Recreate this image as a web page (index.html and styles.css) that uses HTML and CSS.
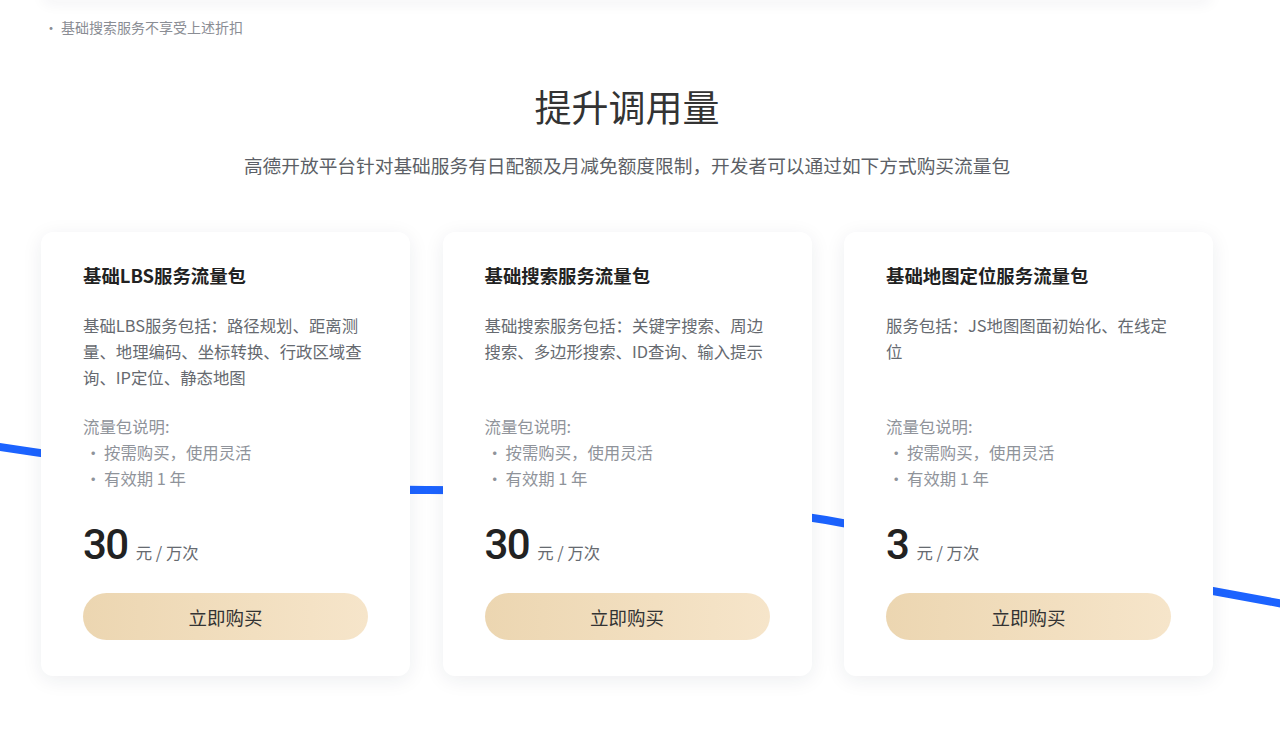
FILE: index.html
```html
<!DOCTYPE html>
<html lang="zh-CN">
<head>
<meta charset="utf-8">
<title>提升调用量</title>
<link rel="stylesheet" href="styles.css">
</head>
<body>
<div class="page">
  <svg class="bg-line" width="1280" height="746" viewBox="0 0 1280 746" aria-hidden="true">
    <path d="M-20 444 C 150 470, 300 490, 426 490 C 560 490, 700 500, 826 520 L 1300 607" fill="none" stroke="#1c63ff" stroke-width="8"/>
  </svg>
  <div class="content">
    <div class="prev-card"></div>
    <ul class="top-note">
      <li>基础搜索服务不享受上述折扣</li>
    </ul>
    <h1 class="title">提升调用量</h1>
    <p class="subtitle">高德开放平台针对基础服务有日配额及月减免额度限制，开发者可以通过如下方式购买流量包</p>
    <div class="cards">
      <div class="card">
        <h2 class="card-title">基础LBS服务流量包</h2>
        <p class="card-desc">基础LBS服务包括：路径规划、距离测量、地理编码、坐标转换、行政区域查询、IP定位、静态地图</p>
        <div class="card-note">
          <div>流量包说明:</div>
          <ul>
            <li>按需购买，使用灵活</li>
            <li>有效期 1 年</li>
          </ul>
        </div>
        <div class="price"><span class="num">30</span><span class="unit">元 / 万次</span></div>
        <button class="buy">立即购买</button>
      </div>
      <div class="card">
        <h2 class="card-title">基础搜索服务流量包</h2>
        <p class="card-desc">基础搜索服务包括：关键字搜索、周边搜索、多边形搜索、ID查询、输入提示</p>
        <div class="card-note">
          <div>流量包说明:</div>
          <ul>
            <li>按需购买，使用灵活</li>
            <li>有效期 1 年</li>
          </ul>
        </div>
        <div class="price"><span class="num">30</span><span class="unit">元 / 万次</span></div>
        <button class="buy">立即购买</button>
      </div>
      <div class="card">
        <h2 class="card-title">基础地图定位服务流量包</h2>
        <p class="card-desc">服务包括：JS地图图面初始化、在线定位</p>
        <div class="card-note">
          <div>流量包说明:</div>
          <ul>
            <li>按需购买，使用灵活</li>
            <li>有效期 1 年</li>
          </ul>
        </div>
        <div class="price"><span class="num">3</span><span class="unit">元 / 万次</span></div>
        <button class="buy">立即购买</button>
      </div>
    </div>
  </div>
</div>
</body>
</html>
```
FILE: styles.css
```css
* { box-sizing: border-box; }
html, body {
  margin: 0;
  padding: 0;
  background: #fff;
  font-family: "Noto Sans CJK SC", "Noto Sans", sans-serif;
  color: #333;
}
.page {
  position: relative;
  width: 1280px;
  height: 746px;
  overflow: hidden;
}
.bg-line {
  position: absolute;
  top: 0;
  left: 0;
  z-index: 0;
}
.content {
  position: relative;
  z-index: 1;
  width: 1172px;
  margin-left: 41px;
}
.prev-card {
  height: 10px;
  margin-top: -10px;
  background: #fff;
  border-radius: 0 0 12px 12px;
  box-shadow: 0 4px 14px rgba(30, 40, 70, 0.06);
}
.top-note {
  list-style: none;
  margin: 17px 0 0;
  padding: 0 0 0 20px;
  font-size: 14px;
  line-height: 20px;
  color: #8a8d94;
}
.top-note li { position: relative; }
.top-note li::before {
  content: "·";
  position: absolute;
  left: -17px;
  color: #8a8d94;
}
.title {
  margin: 43px 0 0;
  text-align: center;
  font-size: 37px;
  line-height: 52px;
  font-weight: 400;
  color: #333;
}
.subtitle {
  margin: 19px 0 0;
  text-align: center;
  font-size: 18.7px;
  line-height: 28px;
  color: #5c5f66;
}
.cards {
  margin-top: 53px;
  display: grid;
  grid-template-columns: repeat(3, 369px);
  column-gap: 32.5px;
}
.card {
  background: #fff;
  border-radius: 12px;
  box-shadow: 0 4px 20px rgba(30, 40, 70, 0.08);
  padding: 30px 42px 36px;
  display: flex;
  flex-direction: column;
}
.card-title {
  margin: 0;
  font-size: 18.4px;
  line-height: 26px;
  font-weight: 700;
  color: #222;
}
.card-desc {
  margin: 24px 0 0;
  height: 78px;
  font-size: 16.4px;
  line-height: 26px;
  color: #666a70;
}
.card-note {
  margin-top: 23px;
  font-size: 16.4px;
  line-height: 26px;
  color: #8f939a;
}
.card-note ul {
  list-style: none;
  margin: 0;
  padding: 0 0 0 21px;
}
.card-note li { position: relative; }
.card-note li::before {
  content: "·";
  position: absolute;
  left: -19px;
}
.price {
  margin-top: 30px;
  height: 48px;
  display: flex;
  align-items: baseline;
}
.price .num {
  font-family: Roboto, "Noto Sans", sans-serif;
  font-size: 42px;
  line-height: 48px;
  font-weight: 500;
  letter-spacing: -1.5px;
  color: #222;
}
.price .unit {
  margin-left: 8px;
  font-size: 16.4px;
  color: #666a70;
}
.buy {
  margin-top: 24px;
  width: 285px;
  height: 47px;
  border: 0;
  border-radius: 24px;
  background: linear-gradient(90deg, #ecd6b1 0%, #f6e5ca 100%);
  font-family: "Noto Sans CJK SC", "Noto Sans", sans-serif;
  font-size: 18.5px;
  color: #333;
  cursor: pointer;
}
```
